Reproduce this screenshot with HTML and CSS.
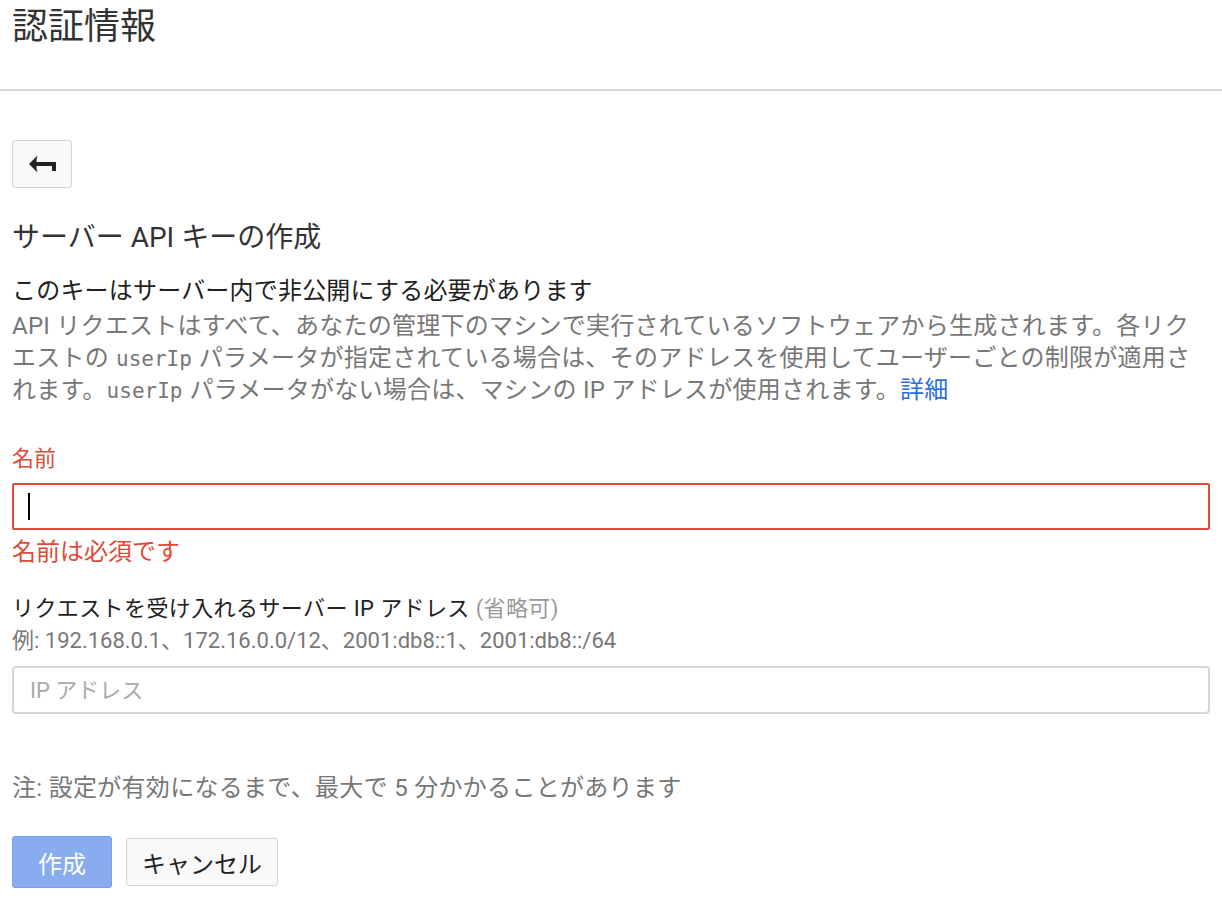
FILE: index.html
```html
<!DOCTYPE html>
<html lang="ja">
<head>
<meta charset="utf-8">
<title>認証情報</title>
<link rel="stylesheet" href="styles.css">
</head>
<body>
<header class="page-header">
  <h1 class="page-title">認証情報</h1>
</header>
<main class="content">
  <button class="back-btn" type="button" aria-label="戻る">
    <svg class="back-icon" width="28" height="18" viewBox="0 0 28 18">
      <path d="M0 9 L8.5 0.5 Q7.2 4.5 7.5 7 L27 7 L27 16 L23 16 L23 11 L7.5 11 Q7.2 13.5 8.5 17.5 Z" fill="#222"/>
    </svg>
  </button>
  <h2 class="section-title">サーバー API キーの作成</h2>
  <p class="lead">このキーはサーバー内で非公開にする必要があります</p>
  <p class="desc">API リクエストはすべて、あなたの管理下のマシンで実行されているソフトウェアから生成されます。各リクエストの<span class="mono mono-gap">userIp</span>パラメータが指定されている場合は、そのアドレスを使用してユーザーごとの制限が適用されます。<span class="mono mono-end">userIp</span>パラメータがない場合は、マシンの IP アドレスが使用されます。<a class="link" href="#">詳細</a></p>

  <div class="field-label name-label error-text">名前</div>
  <div class="text-box text-box-error"><span class="caret"></span></div>
  <div class="error-msg error-text">名前は必須です</div>

  <div class="field-label ip-label">リクエストを受け入れるサーバー IP アドレス <span class="optional">(省略可)</span></div>
  <div class="hint">例: 192.168.0.1、172.16.0.0/12、2001:db8::1、2001:db8::/64</div>
  <input class="text-input" type="text" placeholder="IP アドレス">

  <p class="note">注: 設定が有効になるまで、最大で 5 分かかることがあります</p>

  <div class="actions">
    <button class="btn btn-primary" type="button">作成</button>
    <button class="btn btn-secondary" type="button">キャンセル</button>
  </div>
</main>
</body>
</html>
```

FILE: styles.css
```css
* { box-sizing: border-box; }

html, body {
  margin: 0;
  padding: 0;
  background: #fff;
}

body {
  font-family: Roboto, "Noto Sans CJK JP", sans-serif;
  color: #222;
}

.page-header {
  height: 91px;
  border-bottom: 2px solid #d8d8d8;
  padding: 0 12px;
}

.page-title {
  margin: 0;
  font-size: 36px;
  font-weight: 400;
  line-height: 54px;
  color: #333;
}

.content {
  padding: 0 12px;
  display: flex;
  flex-direction: column;
  align-items: flex-start;
}

.back-btn {
  margin-top: 49px;
  width: 60px;
  height: 48px;
  background: #f8f8f8;
  border: 1.5px solid #d4d4d4;
  border-radius: 3px;
  display: flex;
  align-items: center;
  justify-content: center;
  padding: 0 0 0 2px;
}

.back-icon { display: block; }

.section-title {
  margin: 30px 0 0;
  font-size: 28px;
  font-weight: 400;
  line-height: 40px;
  color: #333;
}

.lead {
  margin: 17px 0 0;
  font-size: 24px;
  line-height: 32px;
  letter-spacing: 0.2px;
  color: #222;
}

.desc {
  margin: 3px 0 0;
  font-size: 24px;
  line-height: 32px;
  letter-spacing: 0.25px;
  color: #777;
}

.mono {
  font-family: "DejaVu Sans Mono", monospace;
  font-size: 21px;
  line-height: 1;
  letter-spacing: 0;
}

.mono-gap { margin: 0 7px; }
.mono-end { margin: 0 7px 0 0; }

.link {
  color: #2b6fdc;
  text-decoration: none;
}

.field-label {
  font-size: 22px;
  line-height: 30px;
}

.name-label { margin-top: 38px; }

.error-text { color: #dd4b39; }

.text-box {
  margin-top: 9px;
  align-self: stretch;
  height: 47px;
  border: 2px solid #d0d0d0;
  border-radius: 2px;
  padding: 7px 14px;
  display: flex;
  align-items: center;
}

.text-box-error { border-color: #dd4b39; }

.caret {
  display: block;
  width: 2px;
  height: 27px;
  background: #000;
}

.error-msg {
  margin-top: 6px;
  font-size: 24px;
  line-height: 32px;
}

.ip-label {
  margin-top: 26px;
  letter-spacing: 0.4px;
  color: #222;
}

.optional { color: #999; }

.hint {
  margin-top: 2px;
  font-size: 22px;
  line-height: 30px;
  color: #777;
}

.text-input {
  margin-top: 10px;
  align-self: stretch;
  height: 48px;
  border: 2px solid #d6d6d6;
  border-radius: 4px;
  padding: 0 16px;
  font-family: Roboto, "Noto Sans CJK JP", sans-serif;
  font-size: 22px;
  color: #222;
  outline: none;
}

.text-input::placeholder { color: #aaa; }

.note {
  margin: 58px 0 0;
  font-size: 24px;
  line-height: 32px;
  letter-spacing: 0.3px;
  color: #777;
}

.actions {
  margin-top: 32px;
  display: flex;
  align-items: center;
  gap: 14px;
}

.btn {
  font-family: Roboto, "Noto Sans CJK JP", sans-serif;
  font-size: 24px;
  border-radius: 3px;
  cursor: pointer;
}

.btn-primary {
  width: 100px;
  height: 52px;
  background: #88acee;
  border: 1.5px solid #76a0ea;
  color: #fff;
  padding: 0;
}

.btn-secondary {
  width: 152px;
  height: 48px;
  background: #f9f9f9;
  border: 1.5px solid #d4d4d4;
  color: #222;
  padding: 0;
}
```
